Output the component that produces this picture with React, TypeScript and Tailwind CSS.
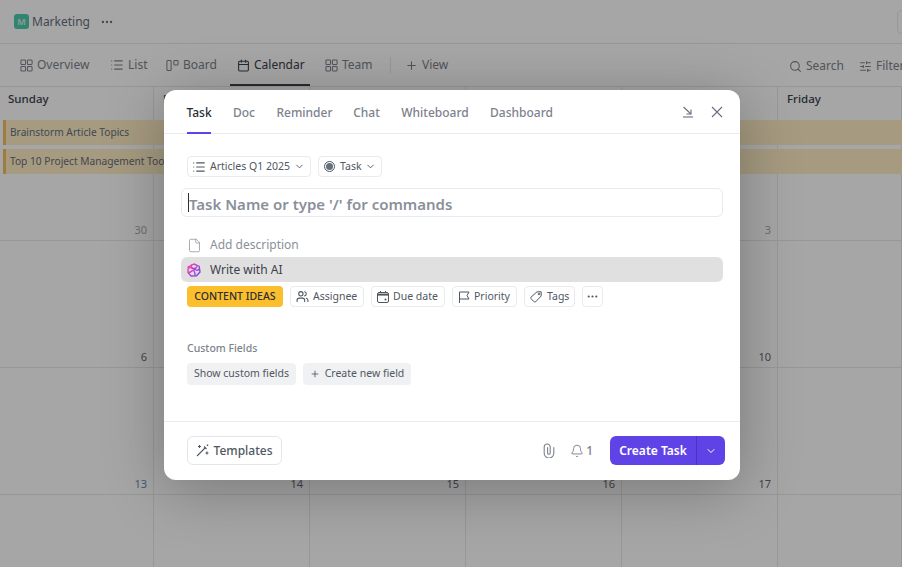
import { ChevronDown, Ellipsis, Bell, Plus, List, Search, Calendar, File, Users, SlidersHorizontal } from "lucide-react";

const weeks = [
  { h: "h-[154px]", nums: ["30", "", "", "", "3", ""] },
  { h: "h-[127px]", nums: ["6", "", "", "", "10", ""] },
  { h: "h-[127px]", nums: ["13", "14", "15", "16", "17", ""] },
  { h: "h-[73px]", nums: ["", "", "", "", "", ""] },
];

const numColor = (n: string) => {
  if (n === "13") return "text-[#6f87a8]";
  if (n === "30" || n === "3") return "text-[#a9a9a9]";
  return "text-[#666b73]";
};

function GridIcon() {
  return (
    <svg width="13" height="13" viewBox="0 0 14 14" fill="none" stroke="currentColor" strokeWidth="1.1">
      <rect x="1" y="1" width="5" height="5" rx="1" />
      <rect x="8" y="1" width="5" height="5" rx="1" />
      <rect x="1" y="8" width="5" height="5" rx="1" />
      <rect x="8" y="8" width="5" height="5" rx="1" />
    </svg>
  );
}

function BoardIcon() {
  return (
    <svg width="13" height="13" viewBox="0 0 14 14" fill="none" stroke="currentColor" strokeWidth="1.1">
      <rect x="1" y="1.5" width="4.5" height="11" rx="1" />
      <rect x="8.5" y="1.5" width="4.5" height="5" rx="1" />
    </svg>
  );
}

function MinimizeIcon() {
  return (
    <svg width="12" height="12" viewBox="0 0 12 12" fill="none" stroke="currentColor" strokeWidth="1.1">
      <path d="M1.5 1 9 8" />
      <path d="M4.5 8H9V3.5" />
      <path d="M1 11h10" />
    </svg>
  );
}

function CloseIcon() {
  return (
    <svg width="16" height="16" viewBox="0 0 16 16" fill="none" stroke="currentColor" strokeWidth="1.1">
      <path d="M3 3l10 10M13 3 3 13" />
    </svg>
  );
}

function AiIcon() {
  return (
    <svg width="14" height="14" viewBox="0 0 14 14" fill="none" strokeWidth="1.4">
      <defs>
        <linearGradient id="ai" x1="0" y1="0" x2="1" y2="1">
          <stop offset="0" stopColor="#ff3fb0" />
          <stop offset="1" stopColor="#7b3ff0" />
        </linearGradient>
      </defs>
      <g stroke="url(#ai)">
        <path d="M7 1 12.2 3.4 13 9 9.5 12.8 4 13 1 9.5 1.2 4Z" />
        <path d="M1.5 5c3-1.5 5 .5 6.5 1.5s3 1 4.5-.5" />
        <path d="M5 1.5C3.5 3 4 5 6 5.5s3 0 4-2" />
        <path d="M1.5 9.5c2 0 3-1 4-2s3 2 2.5 5" />
      </g>
    </svg>
  );
}

function TaskStatusIcon() {
  return (
    <span className="flex h-[11px] w-[11px] items-center justify-center rounded-full border border-[#4f5762]">
      <span className="h-[7px] w-[7px] rounded-full bg-[#656f7d]" />
    </span>
  );
}

function DueIcon() {
  return (
    <svg width="12" height="12" viewBox="0 0 12 12" fill="none" stroke="currentColor" strokeWidth="1">
      <rect x="0.5" y="1.5" width="11" height="10" rx="1.5" />
      <path d="M1 3.6h10" strokeWidth="2" />
      <path d="M3.5 0v2M8.5 0v2" />
      <circle cx="8.5" cy="8.5" r="1" fill="currentColor" stroke="none" />
    </svg>
  );
}

function FlagIcon() {
  return (
    <svg width="12" height="12" viewBox="0 0 12 12" fill="none" stroke="currentColor" strokeWidth="1">
      <path d="M1.5 12V1h9.5L9 4.5 11 8H1.5" />
    </svg>
  );
}

function TagIcon() {
  return (
    <svg width="12" height="12" viewBox="0 0 12 12" fill="none" stroke="currentColor" strokeWidth="1">
      <path d="M7 .8h4.2V5L5.6 10.8a1 1 0 0 1-1.4 0L1 7.6a1 1 0 0 1 0-1.4z" />
      <circle cx="9" cy="3" r=".8" />
    </svg>
  );
}

function ClipIcon() {
  return (
    <svg width="12" height="15" viewBox="0 0 12 15" fill="none" stroke="currentColor" strokeWidth="1.1" strokeLinecap="round">
      <path d="M10.8 4.5v5.8a4.8 4.8 0 0 1-9.6 0V4a3 3 0 0 1 6 0v6a1.3 1.3 0 0 1-2.6 0V4.5" />
    </svg>
  );
}

function TemplatesIcon() {
  return (
    <svg width="13" height="13" viewBox="0 0 13 13" fill="none" stroke="currentColor" strokeWidth="1.1">
      <path d="M1 12 9.5 3.5" />
      <path d="M8 2.5l2.5 2.5" />
      <path d="M3.5 1v3M2 2.5h3M11 7.5v3M9.5 9h3M11.5.5v1.6M10.7 1.3h1.6" />
    </svg>
  );
}

function Chip({ icon, label, chevron, className = "" }: { icon: React.ReactNode; label: string; chevron?: boolean; className?: string }) {
  return (
    <button className={`flex h-[21px] items-center rounded-[4px] border border-[#e8eaed] bg-white pl-[5px] text-[10.5px] text-[#4f5762] ${className}`}>
      {icon}
      <span className="pt-px whitespace-nowrap">{label}</span>
      {chevron && <ChevronDown className="mr-[5px] ml-auto h-[11px] w-[11px]" />}
    </button>
  );
}

function NavTab({ icon, label, active, className = "" }: { icon: React.ReactNode; label: string; active?: boolean; className?: string }) {
  return (
    <div className={`flex h-[42px] items-center gap-[4px] border-b-2 pt-[2px] pl-[7px] text-[12px] ${active ? "border-[#3c414a] text-[#3c414a]" : "border-transparent text-[#7c828c]"} ${className}`}>
      {icon}
      <span>{label}</span>
    </div>
  );
}

export default function App() {
  return (
    <div className="relative h-[567px] w-[902px] overflow-hidden bg-white font-['Noto_Sans',sans-serif]">
      {/* page behind the dialog */}
      <div className="flex h-[44px] items-center border-b border-[#e8e8e8] pl-[14px] text-[#656f7d]">
        <span className="flex h-[15px] w-[15px] items-center justify-center rounded-[3px] bg-[#4fc9ae] text-[9px] font-bold text-white/70">M</span>
        <span className="ml-[3px] text-[12px]">Marketing</span>
        <Ellipsis className="ml-[10px] h-[14px] w-[14px]" />
        <div className="ml-auto h-[24px] w-[5px] rounded-l-[5px] border border-r-0 border-[#e8e8e8]" />
      </div>
      <div className="flex h-[43px] items-start border-b border-[#e8e8e8] pl-[13px]">
        <NavTab icon={<GridIcon />} label="Overview" className="w-[84px]" />
        <NavTab icon={<List className="-ml-px h-[14px] w-[14px]" />} label="List" className="ml-[7px] w-[49px] gap-[3px]" />
        <NavTab icon={<BoardIcon />} label="Board" className="ml-[6px] w-[65px]" />
        <NavTab icon={<Calendar className="h-[13px] w-[13px]" />} label="Calendar" active className="ml-[6px] w-[80px]" />
        <NavTab icon={<GridIcon />} label="Team" className="ml-[8px] w-[60px] gap-[3px]" />
        <div className="mt-[13px] mr-[7px] ml-[12px] h-[16px] w-px bg-[#e8e8e8]" />
        <NavTab icon={<Plus className="h-[13px] w-[13px]" />} label="View" />
        <div className="ml-auto flex h-[42px] items-center pt-[2px] text-[12px] text-[#7c828c]">
          <Search className="h-[13px] w-[13px]" />
          <span className="ml-[4px]">Search</span>
          <SlidersHorizontal className="ml-[15px] h-[13px] w-[13px]" />
          <span className="ml-[4px] w-[26px] overflow-hidden whitespace-nowrap">Filter</span>
        </div>
      </div>

      <div className="relative">
        <div className="grid grid-cols-[154px_156px_156px_156px_156px_1fr]">
          {weeks.map((w, i) =>
            w.nums.map((n, j) => (
              <div key={`${i}-${j}`} className={`${w.h} flex items-end justify-end border-r border-b border-[#e8e8e8] pr-[6px] pb-[2px] text-[11px] ${numColor(n)}`}>
                {n}
              </div>
            )),
          )}
        </div>
        <span className="absolute top-[3px] left-[8px] text-[11.5px] font-medium text-[#3c414a]">Sunday</span>
        <span className="absolute top-[3px] left-[163px] text-[11.5px] font-medium text-[#3c414a]">Monday</span>
        <span className="absolute top-[3px] left-[787px] text-[11.5px] font-medium text-[#3c414a]">Friday</span>
        <div className="absolute top-[33px] right-0 left-[3px] flex h-[25px] items-center border-l-[3px] border-[#f0c060] bg-[#ffeec5] pl-[4px] text-[10.2px] text-[#656f7d]">
          Brainstorm Article Topics
        </div>
        <div className="absolute top-[62px] right-0 left-[3px] flex h-[25px] items-center border-l-[3px] border-[#f0c060] bg-[#ffeec5] pl-[4px] text-[10.2px] text-[#656f7d]">
          Top 10 Project Management Tools
        </div>
      </div>

      {/* overlay */}
      <div className="absolute inset-0 bg-black/35" />

      {/* dialog */}
      <div className="absolute top-[90px] left-[164px] flex h-[390px] w-[576px] flex-col rounded-[12px] bg-white shadow-[0_10px_60px_rgba(0,0,0,0.28)]">
        <div className="flex h-[44px] items-stretch gap-[22px] border-b border-[#e8eaed] pl-[23px] text-[12px] font-medium whitespace-nowrap text-[#7c828c]">
          <div className="-mb-px flex w-[24px] items-center justify-center border-b-2 border-[#5f43e6] pt-[3px] text-[#2a2e34]">Task</div>
          <div className="flex w-[22px] items-center justify-center pt-[3px]">Doc</div>
          <div className="flex w-[55px] items-center justify-center pt-[3px]">Reminder</div>
          <div className="-ml-px flex w-[27px] items-center justify-center pt-[3px]">Chat</div>
          <div className="-ml-px flex w-[68px] items-center justify-center pt-[3px]">Whiteboard</div>
          <div className="flex w-[61px] items-center justify-center pt-[3px]">Dashboard</div>
          <div className="ml-auto flex items-center gap-[15px] pr-[15px] text-[#656f7d]">
            <MinimizeIcon />
            <CloseIcon />
          </div>
        </div>

        <div className="flex flex-1 flex-col pt-[22px]">
          <div className="flex gap-[7px] pl-[23px]">
            <Chip
              icon={<List className="mr-[4px] -ml-px h-[14px] w-[14px]" />}
              label="Articles Q1 2025"
              chevron
              className="w-[124px]"
            />
            <Chip icon={<span className="mr-[5px]"><TaskStatusIcon /></span>} label="Task" chevron className="w-[64px]" />
          </div>

          <div className="mx-[17px] mt-[11px] flex h-[29px] items-center rounded-[6px] border border-[#e8eaed] pl-[6px]">
            <span className="h-[19px] w-px bg-[#2a2e34]" />
            <span className="pt-[3px] text-[15px] font-semibold text-[#8a909a]">Task Name or type '/' for commands</span>
          </div>

          <div className="mx-[17px] mt-[16px] flex h-[24px] items-center gap-[8px] pl-[6px] text-[12px] text-[#8a909a]">
            <File className="h-[15px] w-[15px]" strokeWidth={1.2} />
            <span>Add description</span>
          </div>
          <div className="mx-[17px] flex h-[25px] items-center gap-[8px] rounded-[6px] bg-[#e0e0e0] pl-[6px] text-[12px] text-[#3c414a]">
            <span className="w-[15px]"><AiIcon /></span>
            <span className="pt-px">Write with AI</span>
          </div>

          <div className="mt-[4px] flex gap-[7px] pl-[23px]">
            <span className="flex h-[21px] w-[96px] items-center justify-center rounded-[4px] bg-[#fbbf2d] pt-px text-[10.5px] font-medium text-[#2a2e34]">CONTENT IDEAS</span>
            <Chip icon={<Users className="mr-[4px] h-[13px] w-[13px]" />} label="Assignee" className="w-[74px]" />
            <Chip icon={<span className="mr-[4px]"><DueIcon /></span>} label="Due date" className="w-[74px]" />
            <Chip icon={<span className="mr-[4px]"><FlagIcon /></span>} label="Priority" className="w-[65px]" />
            <Chip icon={<span className="mr-[5px]"><TagIcon /></span>} label="Tags" className="w-[51px]" />
            <button className="flex h-[21px] w-[21px] items-center justify-center rounded-[4px] border border-[#e8eaed] text-[#4f5762]">
              <Ellipsis className="h-[13px] w-[13px]" />
            </button>
          </div>

          <div className="mt-[34px] pl-[23px] text-[10.5px] font-medium text-[#7c828c]">Custom Fields</div>
          <div className="mt-[6px] flex gap-[7px] pl-[23px] text-[10.5px] text-[#4f5762]">
            <span className="flex h-[22px] w-[109px] items-center justify-center rounded-[4px] bg-[#f0f1f3] pt-px">Show custom fields</span>
            <span className="flex h-[22px] w-[108px] items-center justify-center gap-[5px] rounded-[4px] bg-[#f0f1f3] pt-px">
              <Plus className="h-[10px] w-[10px]" />
              Create new field
            </span>
          </div>
        </div>

        <div className="flex h-[59px] items-center border-t border-[#e8eaed] pr-[15px] pb-[1px] pl-[23px]">
          <button className="flex h-[29px] w-[95px] items-center justify-center gap-[4px] rounded-[6px] border border-[#e4e6e9] text-[12px] font-medium text-[#4f5762]">
            <TemplatesIcon />
            <span className="pt-px">Templates</span>
          </button>
          <span className="ml-auto text-[#7c828c]"><ClipIcon /></span>
          <Bell className="ml-[15px] h-[14px] w-[14px] text-[#656f7d]" strokeWidth={1.4} />
          <span className="ml-[2px] text-[12px] font-medium text-[#7c828c]">1</span>
          <div className="ml-[17px] flex h-[29px] w-[115px] overflow-hidden rounded-[6px] bg-[#5f43e6] text-white">
            <span className="flex w-[87px] items-center justify-center border-r border-[#4c34c0] pt-px text-[12px] font-semibold">Create Task</span>
            <span className="flex flex-1 items-center justify-center pr-px">
              <ChevronDown className="h-[12px] w-[12px]" />
            </span>
          </div>
        </div>
      </div>
    </div>
  );
}
